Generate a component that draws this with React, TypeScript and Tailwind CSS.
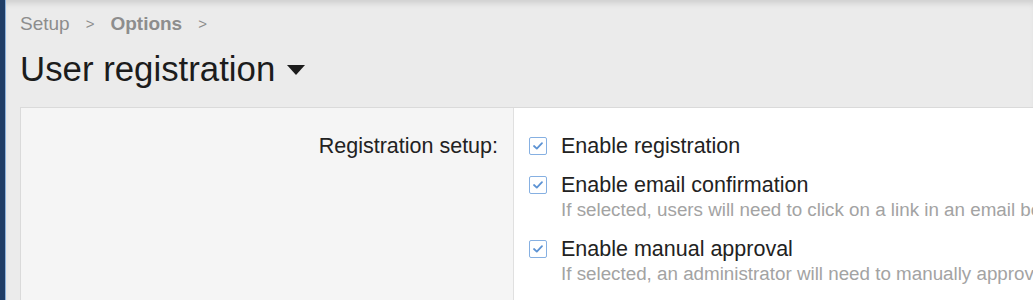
import React from "react";

function Check() {
  return (
    <span className="mt-[4px] flex h-[18px] w-[18px] shrink-0 items-center justify-center rounded-[2px] border-[1.5px] border-[#86b0e2] bg-white">
      <svg width="12" height="10" viewBox="0 0 12 10" fill="none">
        <path d="M2 5 L4.8 7.6 L10 2.2" stroke="#5d93d4" strokeWidth="1.8" strokeLinecap="round" strokeLinejoin="round" />
      </svg>
    </span>
  );
}

function Item({ label, desc, className = "" }: { label: string; desc?: string; className?: string }) {
  return (
    <div className={"flex gap-[14px] " + className}>
      <Check />
      <div className="min-w-0">
        <div className="whitespace-nowrap text-[21.5px] leading-[26px] text-[#222]">{label}</div>
        {desc && <div className="mt-[1px] whitespace-nowrap text-[18.8px] leading-[22px] text-[#a3a3a3]">{desc}</div>}
      </div>
    </div>
  );
}

export default function App() {
  return (
    <div className="flex h-[300px] w-[1033px] overflow-hidden bg-[#ebebeb] font-['Liberation_Sans',Arial,sans-serif]">
      <div className="w-[6px] shrink-0 border-r border-[#8db1da] bg-[#1f3d66]" />
      <div className="min-w-0 flex-1 pl-[14px] shadow-[inset_0_6px_6px_-3px_rgba(0,0,0,0.13)]">
        <div className="flex items-center pt-[12px] text-[19px] leading-[24px] text-[#8d8d8d]">
          <span>Setup</span>
          <span className="mx-[16px] text-[15px]">&gt;</span>
          <span className="font-bold">Options</span>
          <span className="mx-[16px] text-[15px]">&gt;</span>
        </div>
        <div className="mt-[12px] flex items-center text-[34.8px] leading-[42px] text-[#1c1c1c]">
          <span>User registration</span>
          <svg className="ml-[12px] mt-[2px]" width="18" height="10" viewBox="0 0 18 10">
            <path d="M0 0 H18 L9 10 Z" fill="#1c1c1c" />
          </svg>
        </div>
        <div className="mt-[17px] flex h-[300px] w-[1100px] border-l border-t border-[#dadada]">
          <div className="w-[493px] shrink-0 border-r border-[#e0e0e0] bg-[#f5f5f5] pr-[15px] pt-[25px] text-right text-[21.5px] leading-[26px] text-[#222]">
            Registration setup:
          </div>
          <div className="flex-1 bg-white pl-[15px] pt-[25px]">
            <Item label="Enable registration" />
            <Item
              className="mt-[13px]"
              label="Enable email confirmation"
              desc="If selected, users will need to click on a link in an email before their account is activated."
            />
            <Item
              className="mt-[15px]"
              label="Enable manual approval"
              desc="If selected, an administrator will need to manually approve new user accounts."
            />
          </div>
        </div>
      </div>
    </div>
  );
}
